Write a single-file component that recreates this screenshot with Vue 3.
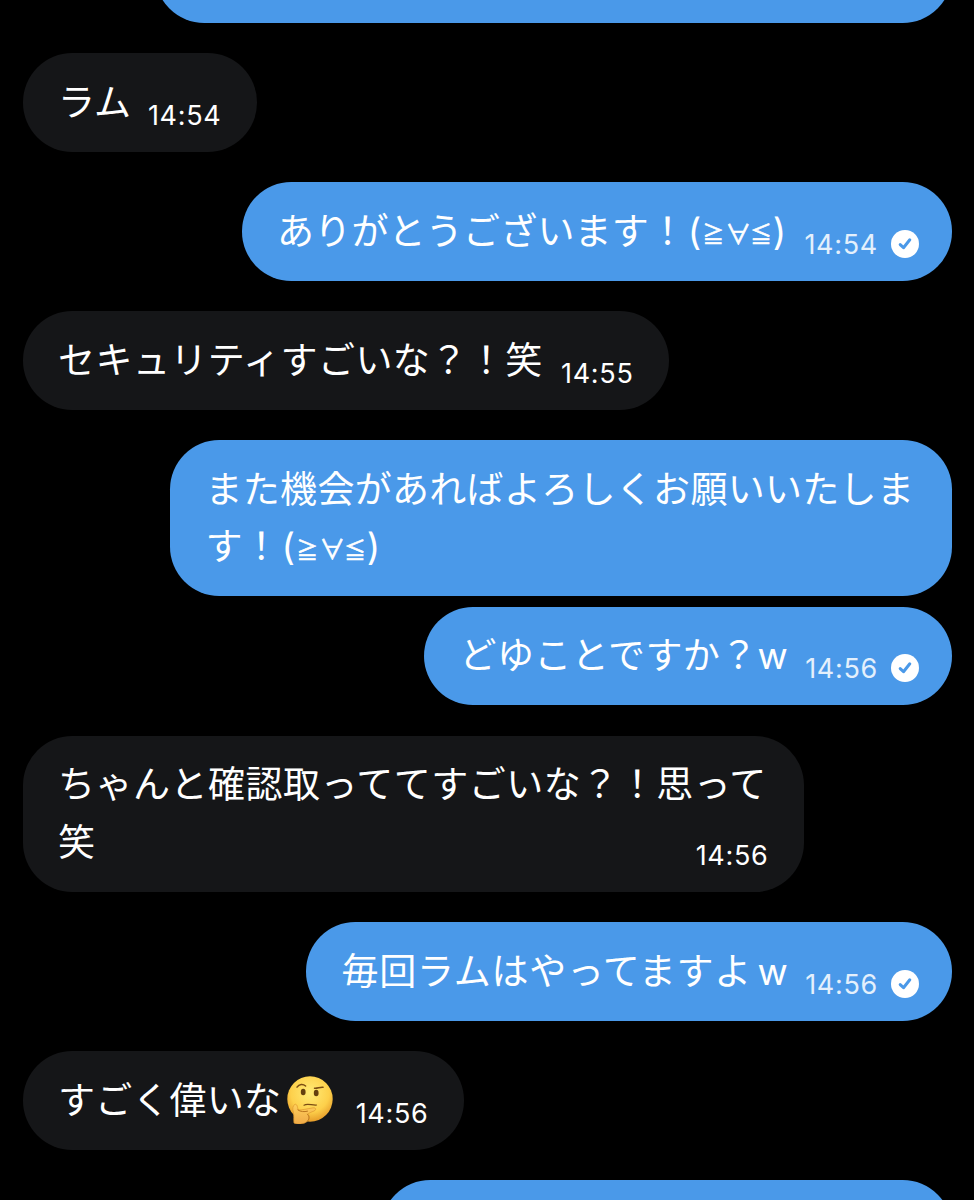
<template>
  <main class="chat">
    <div
      v-for="message in messages"
      :key="message.id"
      class="row"
      :class="{ sent: message.sent, grouped: message.grouped }"
    >
      <div class="bubble" :style="{ width: message.width + 'px' }">
        <p class="text" :style="{ letterSpacing: (message.tracking || 0.2) + 'px' }">
          <template v-for="(line, i) in message.lines" :key="i">
            <br v-if="i > 0">{{ line }}</template><span v-if="message.laugh" class="laugh">w</span><span v-if="message.kaomoji" class="kaomoji">(<span class="symbol">≧</span><span class="symbol forall">∀</span><span class="symbol">≦</span>)</span><svg v-if="message.thinking" class="emoji" viewBox="0 0 46 48" role="img" aria-label="thinking face">
            <defs>
              <radialGradient id="face" cx="0.5" cy="0.36" r="0.65">
                <stop offset="0" stop-color="#ffeb76" />
                <stop offset="0.65" stop-color="#fdd04b" />
                <stop offset="1" stop-color="#e59a28" />
              </radialGradient>
              <linearGradient id="hand" x1="0" y1="0" x2="0" y2="1">
                <stop offset="0" stop-color="#ffd05c" />
                <stop offset="1" stop-color="#efaa48" />
              </linearGradient>
            </defs>
            <circle cx="23" cy="23" r="22.7" fill="url(#face)" />
            <ellipse cx="16.2" cy="16" rx="2.4" ry="3.3" fill="#65400e" />
            <ellipse cx="29.2" cy="17" rx="2.4" ry="3.3" fill="#65400e" />
            <path d="M10 11.2C12.2 7.8 16 7.6 18.6 10" class="brow" />
            <path d="M27.5 12.2C30 12.8 33 10.8 36 11.3" class="brow" />
            <path d="M17 29.2C20.5 27 25 29.5 29.5 29" class="mouth" />
            <path d="M7 47C6.5 43 7.2 39.5 6.3 36C5.3 32.5 5.8 29.5 8 28.3C9.8 28 10.5 30 11 34C15 34.3 20 32.7 26.2 31.8C29 31.5 29.5 34 27 35C24.5 36 22 37 20.5 38.2C23 39.5 23 42.5 21 44.5C18 48.3 11 49 7 47Z" class="hand" />
            <path d="M11 34C13.5 35.8 17 36 20.5 35.2M20.5 38.2C22.4 40 22.3 43 21 44.5" class="finger" />
          </svg>
        </p>
        <div v-if="message.time" class="meta">
          <time>{{ message.time }}</time>
          <svg v-if="message.sent" class="check" viewBox="0 0 28 28">
            <circle cx="14" cy="14" r="14" fill="#fff" />
            <path d="M9.2 14.6L12.5 17.7L18.8 9.8" />
          </svg>
        </div>
      </div>
    </div>
  </main>
</template>

<script setup>
const messages = [
  { id: 1, sent: true, width: 797, lines: [] },
  { id: 2, width: 234.5, lines: ['ラム'], time: '14:54' },
  { id: 3, sent: true, width: 710, lines: ['ありがとうございます！'], kaomoji: true, time: '14:54' },
  { id: 4, width: 646.5, lines: ['セキュリティすごいな？！笑'], time: '14:55', tracking: 0.45 },
  { id: 5, sent: true, width: 781.5, lines: ['また機会があればよろしくお願いいたしま', 'す！'], kaomoji: true, tracking: 0.3 },
  { id: 6, sent: true, grouped: true, width: 527.5, lines: ['どゆことですか？w'], time: '14:56', tracking: 0.4 },
  { id: 7, width: 781.5, lines: ['ちゃんと確認取っててすごいな？！思って', '笑'], time: '14:56', tracking: 0.5 },
  { id: 8, sent: true, width: 645.5, lines: ['毎回ラムはやってますよ'], laugh: true, time: '14:56', tracking: 0.75 },
  { id: 9, width: 441.5, lines: ['すごく偉いな'], thinking: true, time: '14:56' },
  { id: 10, sent: true, width: 571, lines: [] }
]
</script>

<style>
body {
  margin: 0;
  background: #000;
}
</style>

<style scoped>
.chat {
  box-sizing: border-box;
  display: flex;
  flex-direction: column;
  justify-content: flex-start;
  height: 1200px;
  padding: 0 22.5px;
  overflow: hidden;
  background: #000;
  font-family: Inter, "Noto Sans CJK JP", sans-serif;
  color: #fff;
}

.row {
  display: flex;
  flex: none;
  margin-top: 30.5px;
}

/* the conversation is scrolled part way through the first bubble */
.row:first-child {
  margin-top: -76px;
}

.row.sent {
  justify-content: flex-end;
}

.row.grouped {
  margin-top: 10.5px;
}

/* text and time share one cell, so the time sits under a wrapped line */
.bubble {
  box-sizing: border-box;
  display: grid;
  min-height: 98.5px;
  padding: 20.5px 36px 20.5px 35.5px;
  border-radius: 49.25px;
  background: #151618;
}

.sent .bubble {
  padding-right: 32.5px;
  background: #4a99e9;
}

.text {
  grid-area: 1 / 1;
  margin: 0;
  font-size: 37px;
  line-height: 57.5px;
  white-space: nowrap;
}

.laugh {
  margin-left: 5.5px;
}

.kaomoji {
  margin-left: 1.5px;
}

.symbol {
  display: inline-block;
  width: 23.8px;
  font-family: "Noto Sans CJK JP", sans-serif;
  font-size: 21.5px;
  line-height: 1;
  letter-spacing: 0;
  text-align: center;
  vertical-align: 2.5px;
  -webkit-text-stroke: 0.6px currentColor;
}

.forall {
  font-size: 26px;
  vertical-align: 1px;
}

.emoji {
  width: 46px;
  height: 48px;
  margin-left: 6px;
  vertical-align: -10px;
}

.brow,
.mouth,
.finger {
  fill: none;
  stroke: #7a4c13;
  stroke-width: 1.5;
  stroke-linecap: round;
}

.mouth {
  stroke-width: 1.2;
}

.hand {
  fill: url(#hand);
  stroke: #dc962c;
  stroke-width: 0.7;
}

.finger {
  stroke: #b9751f;
  stroke-width: 1;
}

.meta {
  display: flex;
  grid-area: 1 / 1;
  align-items: center;
  align-self: end;
  justify-self: end;
  gap: 13px;
  height: 28px;
  margin-right: -0.5px;
  margin-bottom: 1.5px;
  font-size: 27px;
  line-height: 28px;
  letter-spacing: 0.7px;
}

.sent .meta {
  margin-right: 0;
  color: #e4f0fc;
}

.check {
  width: 28px;
  height: 28px;
  margin-bottom: 1.5px;
}

.check path {
  fill: none;
  stroke: #4a99e9;
  stroke-width: 3;
  stroke-linecap: round;
  stroke-linejoin: round;
}
</style>
